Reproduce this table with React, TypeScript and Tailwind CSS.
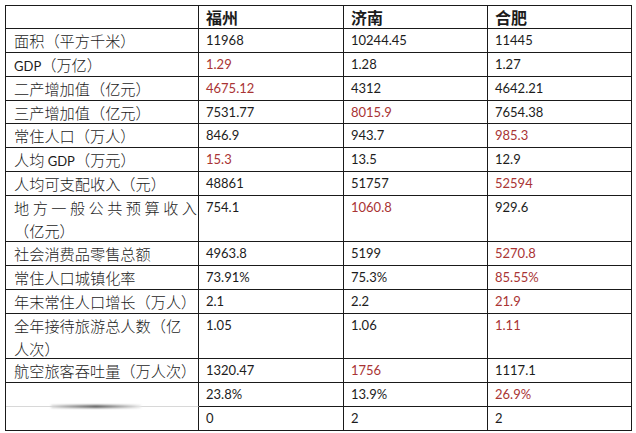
import React from "react";

type Row = {
  label: React.ReactNode;
  v: string[];
  red: number[];
  h: string;
};

const L = ({ children }: { children: React.ReactNode }) => (
  <span className="font-['Lato'] font-normal text-[13px]">{children}</span>
);

const rows: Row[] = [
  { label: "面积（平方千米）", v: ["11968", "10244.45", "11445"], red: [], h: "h-[24px]" },
  { label: <><L>GDP</L>（万亿）</>, v: ["1.29", "1.28", "1.27"], red: [0], h: "h-[24px]" },
  { label: "二产增加值（亿元）", v: ["4675.12", "4312", "4642.21"], red: [0], h: "h-[24px]" },
  { label: "三产增加值（亿元）", v: ["7531.77", "8015.9", "7654.38"], red: [1], h: "h-[23px]" },
  { label: "常住人口（万人）", v: ["846.9", "943.7", "985.3"], red: [2], h: "h-[24px]" },
  { label: <>人均 <L>GDP</L>（万元）</>, v: ["15.3", "13.5", "12.9"], red: [0], h: "h-[24px]" },
  { label: "人均可支配收入（元）", v: ["48861", "51757", "52594"], red: [2], h: "h-[24px]" },
  {
    label: (
      <>
        <span className="block text-justify [text-align-last:justify]">地方一般公共预算收入</span>
        <span className="block">（亿元）</span>
      </>
    ),
    v: ["754.1", "1060.8", "929.6"],
    red: [1],
    h: "h-[46px]",
  },
  { label: "社会消费品零售总额", v: ["4963.8", "5199", "5270.8"], red: [2], h: "h-[24px]" },
  { label: "常住人口城镇化率", v: ["73.91%", "75.3%", "85.55%"], red: [2], h: "h-[24px]" },
  { label: "年末常住人口增长（万人）", v: ["2.1", "2.2", "21.9"], red: [2], h: "h-[24px]" },
  {
    label: (
      <>
        <span className="block">全年接待旅游总人数（亿</span>
        <span className="block">人次）</span>
      </>
    ),
    v: ["1.05", "1.06", "1.11"],
    red: [2],
    h: "h-[45px]",
  },
  { label: "航空旅客吞吐量（万人次）", v: ["1320.47", "1756", "1117.1"], red: [1], h: "h-[24px]" },
  { label: "", v: ["23.8%", "13.9%", "26.9%"], red: [2], h: "h-[24px]" },
  { label: "", v: ["0", "2", "2"], red: [], h: "h-[24px]" },
];

export default function App() {
  return (
    <div className="w-[636px] h-[433px] bg-white pt-[5px] pl-[5px] overflow-hidden">
      <div className="grid grid-cols-[193px_145px_144px_144px] border-l border-t border-[#1a1a1a] w-[627px] text-[#1c1c1c]">
        <div className="h-[23px] border-r border-b border-[#1a1a1a]" />
        {["福州", "济南", "合肥"].map((c) => (
          <div
            key={c}
            className="h-[23px] border-r border-b border-[#1a1a1a] pl-[7px] font-['Noto_Sans_CJK_SC',sans-serif] font-bold text-[16px] leading-[22px]"
          >
            {c}
          </div>
        ))}
        {rows.map((r, i) => {
          const wm = i === rows.length - 2;
          return (
            <React.Fragment key={i}>
              <div
                className={`${r.h} relative border-r border-b ${
                  wm ? "border-b-[#d8d8d8]" : "border-b-[#1a1a1a]"
                } border-r-[#1a1a1a] pl-[8px] pr-[1px] font-['Noto_Sans_CJK_SC',sans-serif] font-light text-[15.2px] leading-[23px] whitespace-nowrap`}
              >
                {r.label}
                {wm && (
                  <div className="absolute left-[45px] bottom-[-2px] w-[90px] h-[3px] bg-gradient-to-r from-[#d8d8d8] via-[#5a5a5a] to-[#ececec] blur-[1px]" />
                )}
              </div>
              {r.v.map((v, j) => (
                <div
                  key={j}
                  className={`${r.h} border-r border-b border-[#1a1a1a] pl-[7px] font-['Lato',sans-serif] text-[13px] leading-[23px] ${
                    r.red.includes(j) ? "text-[#a93434]" : ""
                  }`}
                >
                  {v}
                </div>
              ))}
            </React.Fragment>
          );
        })}
      </div>
    </div>
  );
}
